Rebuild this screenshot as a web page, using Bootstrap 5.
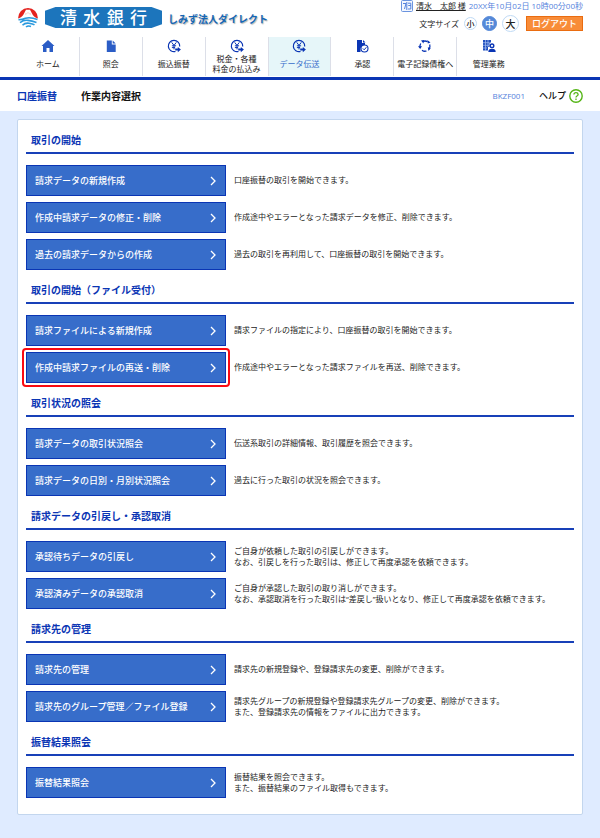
<!DOCTYPE html>
<html lang="ja">
<head>
<meta charset="utf-8">
<meta name="viewport" content="width=device-width, initial-scale=1">
<title>作業内容選択</title>
<link rel="stylesheet" href="https://cdn.jsdelivr.net/npm/bootstrap@5.3.0/dist/css/bootstrap.min.css">
<style>
:root { --navy: #0a35b4; --fill: #376dca; --sky: #dfebff; }
body { font-family: "Noto Sans CJK JP", sans-serif; font-size: 8px; line-height: 11px; color: #222; background: var(--sky); }
a { text-decoration: none; }
.latin { font-family: "Open Sans", "Noto Sans CJK JP", sans-serif; }
.gutter { padding-left: 17px; padding-right: 17px; }
.top-row { height: 37px; }
.brand { height: 35px; }
.bank-plate { width: 117px; height: 21px; padding: 0 15px; margin-left: 6px; color: #fff; background: #1c75bc; font-size: 17px; line-height: 20px; font-weight: 500; clip-path: polygon(9% 0, 91% 0, 100% 18%, 100% 82%, 91% 100%, 9% 100%, 0 82%, 0 18%); }
.service { margin-left: 6px; padding-top: 3px; font-size: 10px; line-height: 16px; font-weight: 700; color: #1567b5; text-shadow: 1px 1px 1px #b4b4b4; }
.tools { gap: 3px; }
.user-line { gap: 3px; line-height: 12px; }
.user-line a { color: #222; text-decoration: underline; }
.stamp, .screen-id { color: #5582dc; }
.size-line { gap: 5px; line-height: 14px; }
.size-btn { width: 17px; height: 17px; padding: 0; border: 1px solid #bfdaf5; border-radius: 50%; background: #fff; font-size: 10px; line-height: 14px; font-weight: 500; color: #222; }
.size-s { width: 13px; height: 13px; font-size: 8px; line-height: 10px; }
.size-m { width: 15px; height: 15px; background: #5589d8; border-color: #5589d8; color: #fff; font-size: 9px; line-height: 12px; }
.logout { width: 57px; height: 15px; margin-left: 2px; padding: 0; border: 1px solid #ea6c10; background: #f88c38; color: #fff; font-size: 9px; line-height: 12px; font-weight: 500; }
.menu { border-bottom: 3px solid var(--navy); padding-bottom: 1px; }
.menu-grid { display: grid; grid-template-columns: repeat(9, 1fr); height: 39px; }
.menu-grid a { color: #222; border-right: 1px solid #dcdfe8; padding-top: 2px; }
.menu-grid a:last-child { border-right: 0; }
.menu-grid a.current { background: #e6f6f9; color: var(--fill); }
.menu-grid svg { width: 14px; height: 14px; flex: none; }
.menu-label { height: 22px; line-height: 10px; }
.title-bar { height: 31px; background: #fff; }
.title-bar h1, .title-bar a.crumb { margin: 0; font-size: 10px; line-height: 16px; font-weight: 700; }
.title-bar h1 { margin-left: 24px; color: #111; }
.crumb, .group h2 { color: var(--navy); }
.help { margin-left: 14px; gap: 3px; color: #111; font-size: 9px; font-weight: 500; }
.page { padding-top: 8px; padding-bottom: 23px; }
.panel { background: #fff; border: 1px solid #c3d6ee; border-radius: 2px; padding: 12px 8px 16px; }
.group + .group { margin-top: 12px; }
.group h2 { margin: 0 0 11px; padding: 0 5px 4px; border-bottom: 2px solid #1840b8; font-size: 10px; line-height: 16px; font-weight: 700; }
.rows { gap: 6px; }
.line { gap: 8px; }
.go { flex: 0 0 200px; height: 31px; padding: 0 9px 0 8px; border: 1px solid var(--navy); background: var(--fill); color: #fff; font-size: 9px; line-height: 14px; font-weight: 500; }
.line p { margin: 0; padding-bottom: 2px; }
.pick::after { content: ""; position: absolute; inset: -5px; border: 2px solid #fa0a12; border-radius: 4px; }
</style>
</head>
<body>
<svg class="d-none" aria-hidden="true">
  <symbol id="chev" viewBox="0 0 6 10"><path d="M1 1l4 4-4 4" fill="none" stroke="#fff" stroke-width="1.300"/></symbol>
  <symbol id="yen" viewBox="0 0 14 14"><path d="M8.500 12.500A5.700 5.700 0 1 1 12.700 7.500" fill="none" stroke="#0a35b4" stroke-width="1.200"/><path d="M4.700 3.400L7 6.400l2.300-3.000M7 6.400v4M4.900 6.800h4.200M4.900 8.600h3.200" fill="none" stroke="#0a35b4"/><path d="M8.200 9.600h2.600V7.900l3.100 2.600-3.100 2.700v-1.700H8.200z" fill="#0a35b4"/></symbol>
</svg>

<header class="bg-white">
  <div class="top-row gutter d-flex justify-content-between">
    <div class="brand d-flex align-items-center">
      <svg width="22" height="21" viewBox="0 0 22 21" aria-hidden="true">
        <path d="M1 11.500A10 10.500 0 0 1 21 11.500Q16.500 10.500 14.500 5.500L13.200 7.500 11 5.500 8.800 7.500 7.500 5.500Q5.500 10.500 1 11.500Z" fill="#e4231f"/>
        <path d="M7.500 5.500L9 2.800h4l1.500 2.700-1.300 2-2.200-2-2.200 2z" fill="#fff"/>
        <path d="M1.500 12.800Q5.500 12.700 8.500 11.200 14 10 20.500 12.600M3 15.600Q7 12.700 11 13.400T19.500 15.400M5.500 18.200Q8 15.600 12 16.200T17.500 17.800M9 20Q11 18.300 14 19.400" fill="none" stroke="#2b9ade" stroke-width="1.600"/>
      </svg>
      <div class="bank-plate d-flex justify-content-between"><span>清</span><span>水</span><span>銀</span><span>行</span></div>
      <div class="service">しみず法人ダイレクト</div>
    </div>
    <div class="tools d-flex flex-column align-items-end">
      <div class="user-line d-flex align-items-center">
        <svg width="12" height="12" viewBox="0 0 12 12" aria-hidden="true"><rect x=".5" y=".5" width="11" height="11" rx="1" fill="#f3f7ff" stroke="#6b94df"/><path d="M2 3.500h3L3.500 9M7 3.200h2.800v2.300H7.500h2.300V9H7M5.800 2v8" fill="none" stroke="#5582dc"/></svg>
        <a href="#">清水　太郎 様</a>
        <span class="stamp latin">20XX年10月02日 10時00分00秒</span>
      </div>
      <div class="size-line d-flex align-items-center">
        <span>文字サイズ</span>
        <button type="button" class="size-btn size-s">小</button>
        <button type="button" class="size-btn size-m">中</button>
        <button type="button" class="size-btn">大</button>
        <button type="button" class="logout">ログアウト</button>
      </div>
    </div>
  </div>

  <nav class="menu gutter">
    <div class="menu-grid text-center">
      <a href="#" class="d-flex flex-column align-items-center">
        <svg viewBox="0 0 14 14"><path d="M7 1l6.500 6H12v6H8.500V9h-3v4H2V7H.5z" fill="#2b5dc6"/></svg>
        <span class="menu-label d-flex align-items-center">ホーム</span></a>
      <a href="#" class="d-flex flex-column align-items-center">
        <svg viewBox="0 0 14 14"><path d="M2.800 1.500h5v4h3.900v7.500H2.800z" fill="#2b5dc6"/><path d="M8.700 1.500l3 3.100h-3z" fill="#2b5dc6"/></svg>
        <span class="menu-label d-flex align-items-center">照会</span></a>
      <a href="#" class="d-flex flex-column align-items-center">
        <svg><use href="#yen"/></svg>
        <span class="menu-label d-flex align-items-center">振込振替</span></a>
      <a href="#" class="d-flex flex-column align-items-center">
        <svg><use href="#yen"/></svg>
        <span class="menu-label d-flex align-items-center">税金・各種<br>料金の払込み</span></a>
      <a href="#" class="current d-flex flex-column align-items-center" aria-current="page">
        <svg><use href="#yen"/></svg>
        <span class="menu-label d-flex align-items-center">データ伝送</span></a>
      <a href="#" class="d-flex flex-column align-items-center">
        <svg viewBox="0 0 14 14"><path d="M2 1h5v3h3v2L5.500 9v4H2z" fill="#0a35b4"/><path d="M8 1l2.500 2.500H8z" fill="#0a35b4"/><circle cx="9.500" cy="9.500" r="3.500" fill="#fff" stroke="#0a35b4" stroke-width="1.100"/><path d="M7.800 9.400l1.400 1.400 2.200-2.600" fill="none" stroke="#0a35b4"/></svg>
        <span class="menu-label d-flex align-items-center">承認</span></a>
      <a href="#" class="d-flex flex-column align-items-center">
        <svg viewBox="0 0 14 14"><path d="M4.500 2.700a5 5 0 0 1 5 0M11.700 5.500a5 5 0 0 1-1 5M8.500 12a5 5 0 0 1-4.500-.8M2.300 8.700A5 5 0 0 1 2.700 4.500" fill="none" stroke="#0a35b4" stroke-width="1.300"/><path d="M3 1.500l3-.5-.5 3.500zM0 7.200h4L2.200 10zM9.800 8.200l3 .8-2.300 3zM9.300 1l3.200 2.500-2.700 1z" fill="#0a35b4"/></svg>
        <span class="menu-label d-flex align-items-center">電子記録債権へ</span></a>
      <a href="#" class="d-flex flex-column align-items-center">
        <svg viewBox="0 0 14 14"><path d="M1 1h8v2.500H7.500V8H6v3.500H1z" fill="#2250be"/><path d="M3.500 1v11M6 1v7M1 3.700h6M1 6.300h6M1 9h4" stroke="#a9c1f0" stroke-width=".7"/><circle cx="10" cy="6.800" r="1.800" fill="none" stroke="#0a35b4" stroke-width="1.400"/><path d="M6.300 13q0-3.200 3.700-3.200t3.700 3.200z" fill="#0a35b4"/></svg>
        <span class="menu-label d-flex align-items-center">管理業務</span></a>
    </div>
  </nav>

  <div class="title-bar gutter d-flex align-items-center">
    <a href="#" class="crumb">口座振替</a>
    <h1>作業内容選択</h1>
    <span class="screen-id latin ms-auto">BKZF001</span>
    <a href="#" class="help d-flex align-items-center">ヘルプ
      <svg width="14" height="14" viewBox="0 0 14 14" aria-hidden="true"><circle cx="7" cy="7" r="6.200" fill="#fff" stroke="#55b516" stroke-width="1.400"/><path d="M4.900 5.500Q5 3.600 7 3.600T9.100 5.400Q9.100 6.500 7.700 7.200 7 7.600 7 8.600M7 9.600v1.300" fill="none" stroke="#55b516" stroke-width="1.300"/></svg>
    </a>
  </div>
</header>

<main class="page gutter">
  <div class="panel">
    <section class="group">
      <h2>取引の開始</h2>
      <div class="rows d-flex flex-column">
        <div class="line d-flex align-items-center"><button type="button" class="go d-flex align-items-center justify-content-between">請求データの新規作成<svg width="6" height="10"><use href="#chev"/></svg></button><p>口座振替の取引を開始できます。</p></div>
        <div class="line d-flex align-items-center"><button type="button" class="go d-flex align-items-center justify-content-between">作成中請求データの修正・削除<svg width="6" height="10"><use href="#chev"/></svg></button><p>作成途中やエラーとなった請求データを修正、削除できます。</p></div>
        <div class="line d-flex align-items-center"><button type="button" class="go d-flex align-items-center justify-content-between">過去の請求データからの作成<svg width="6" height="10"><use href="#chev"/></svg></button><p>過去の取引を再利用して、口座振替の取引を開始できます。</p></div>
      </div>
    </section>
    <section class="group">
      <h2>取引の開始（ファイル受付）</h2>
      <div class="rows d-flex flex-column">
        <div class="line d-flex align-items-center"><button type="button" class="go d-flex align-items-center justify-content-between">請求ファイルによる新規作成<svg width="6" height="10"><use href="#chev"/></svg></button><p>請求ファイルの指定により、口座振替の取引を開始できます。</p></div>
        <div class="line d-flex align-items-center"><button type="button" class="go pick position-relative d-flex align-items-center justify-content-between">作成中請求ファイルの再送・削除<svg width="6" height="10"><use href="#chev"/></svg></button><p>作成途中やエラーとなった請求ファイルを再送、削除できます。</p></div>
      </div>
    </section>
    <section class="group">
      <h2>取引状況の照会</h2>
      <div class="rows d-flex flex-column">
        <div class="line d-flex align-items-center"><button type="button" class="go d-flex align-items-center justify-content-between">請求データの取引状況照会<svg width="6" height="10"><use href="#chev"/></svg></button><p>伝送系取引の詳細情報、取引履歴を照会できます。</p></div>
        <div class="line d-flex align-items-center"><button type="button" class="go d-flex align-items-center justify-content-between">請求データの日別・月別状況照会<svg width="6" height="10"><use href="#chev"/></svg></button><p>過去に行った取引の状況を照会できます。</p></div>
      </div>
    </section>
    <section class="group">
      <h2>請求データの引戻し・承認取消</h2>
      <div class="rows d-flex flex-column">
        <div class="line d-flex align-items-center"><button type="button" class="go d-flex align-items-center justify-content-between">承認待ちデータの引戻し<svg width="6" height="10"><use href="#chev"/></svg></button><p>ご自身が依頼した取引の引戻しができます。<br>なお、引戻しを行った取引は、修正して再度承認を依頼できます。</p></div>
        <div class="line d-flex align-items-center"><button type="button" class="go d-flex align-items-center justify-content-between">承認済みデータの承認取消<svg width="6" height="10"><use href="#chev"/></svg></button><p>ご自身が承認した取引の取り消しができます。<br>なお、承認取消を行った取引は<span class="latin">“</span>差戻し<span class="latin">”</span>扱いとなり、修正して再度承認を依頼できます。</p></div>
      </div>
    </section>
    <section class="group">
      <h2>請求先の管理</h2>
      <div class="rows d-flex flex-column">
        <div class="line d-flex align-items-center"><button type="button" class="go d-flex align-items-center justify-content-between">請求先の管理<svg width="6" height="10"><use href="#chev"/></svg></button><p>請求先の新規登録や、登録請求先の変更、削除ができます。</p></div>
        <div class="line d-flex align-items-center"><button type="button" class="go d-flex align-items-center justify-content-between">請求先のグループ管理／ファイル登録<svg width="6" height="10"><use href="#chev"/></svg></button><p>請求先グループの新規登録や登録請求先グループの変更、削除ができます。<br>また、登録請求先の情報をファイルに出力できます。</p></div>
      </div>
    </section>
    <section class="group">
      <h2>振替結果照会</h2>
      <div class="rows d-flex flex-column">
        <div class="line d-flex align-items-center"><button type="button" class="go d-flex align-items-center justify-content-between">振替結果照会<svg width="6" height="10"><use href="#chev"/></svg></button><p>振替結果を照会できます。<br>また、振替結果のファイル取得もできます。</p></div>
      </div>
    </section>
  </div>
</main>
<script src="https://cdn.jsdelivr.net/npm/bootstrap@5.3.0/dist/js/bootstrap.bundle.min.js"></script>
</body>
</html>
